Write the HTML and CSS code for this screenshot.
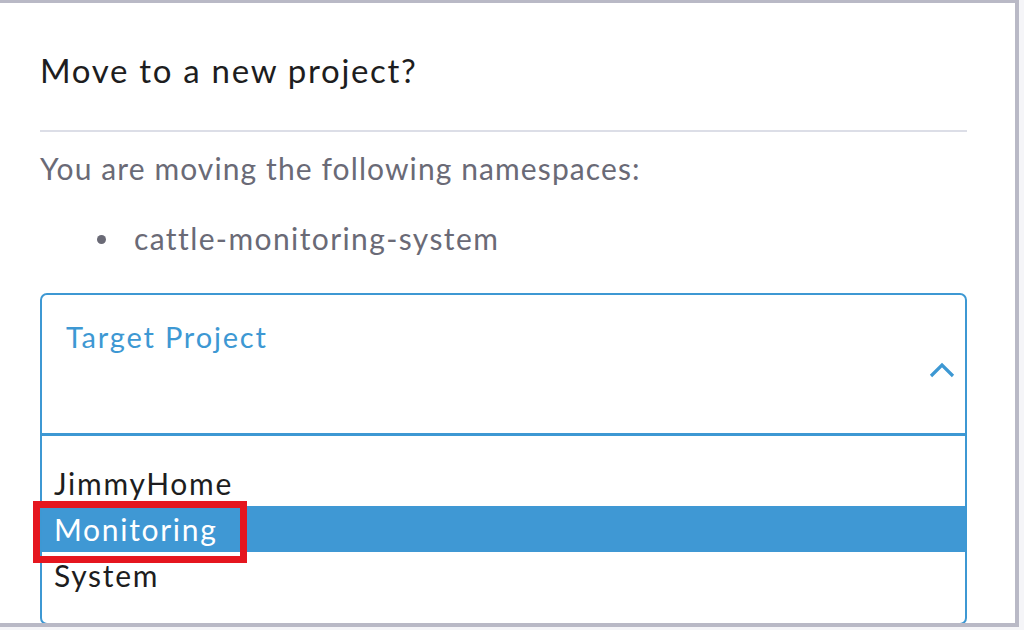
FILE: index.html
```html
<!DOCTYPE html>
<html lang="en">
<head>
<meta charset="utf-8">
<title>Move to a new project?</title>
<link rel="stylesheet" href="styles.css">
</head>
<body>
<div class="modal">
  <h2 class="title">Move to a new project?</h2>
  <hr class="divider">
  <p class="intro">You are moving the following namespaces:</p>
  <ul class="ns-list">
    <li>cattle-monitoring-system</li>
  </ul>
  <div class="select">
    <div class="select-head">
      <span class="select-label">Target Project</span>
      <svg class="chevron" width="26" height="16" viewBox="0 0 26 16" aria-hidden="true">
        <polyline points="2,14 13,3 24,14" fill="none" stroke="#3d98d3" stroke-width="3.2"/>
      </svg>
    </div>
    <ul class="options">
      <li class="option">JimmyHome</li>
      <li class="option selected">Monitoring<span class="annot"></span></li>
      <li class="option">System</li>
    </ul>
  </div>
</div>
</body>
</html>
```
FILE: styles.css
```css
html, body {
  margin: 0;
  padding: 0;
}
body {
  background: #f5f5f8;
  font-family: Lato, "Noto Sans", sans-serif;
  width: 1024px;
  height: 630px;
  overflow: hidden;
}
.modal {
  box-sizing: border-box;
  width: 1019px;
  height: 627px;
  background: #ffffff;
  border-top: 3px solid #b9b9c6;
  border-right: 4px solid #b9b9c6;
  border-bottom: 4px solid #b9b9c6;
  padding: 47px 48px 0 40px;
  overflow: hidden;
}
.title {
  margin: 0;
  font-size: 33px;
  line-height: 40px;
  font-weight: 400;
  letter-spacing: 1.7px;
  color: #1d1d20;
}
.divider {
  margin: 40px 0 0 0;
  border: 0;
  height: 2px;
  background: #dcdee7;
}
.intro {
  margin: 18px 0 0 0;
  font-size: 30px;
  line-height: 36px;
  letter-spacing: 1.1px;
  color: #6a6a76;
}
.ns-list {
  margin: 34px 0 0 0;
  padding: 0 0 0 57px;
  list-style: none;
  font-size: 30px;
  line-height: 36px;
  letter-spacing: 1.4px;
  color: #6a6a76;
}
.ns-list li {
  display: flex;
  align-items: center;
  gap: 28px;
}
.ns-list li::before {
  content: "";
  width: 9px;
  height: 9px;
  border-radius: 50%;
  background: #6a6a76;
  margin-top: 2px;
}
.select {
  margin-top: 37px;
  border: 2px solid #3d98d3;
  border-radius: 7px;
  position: relative;
}
.select-head {
  display: flex;
  align-items: flex-start;
  height: 138px;
  padding: 0 10px 0 24px;
  border-bottom: 3px solid #3d98d3;
}
.select-label {
  flex: 1;
  padding-top: 24px;
  font-size: 29px;
  line-height: 36px;
  letter-spacing: 1.8px;
  color: #3d98d3;
}
.chevron {
  margin-top: 67px;
}
.options {
  list-style: none;
  margin: 0;
  padding: 24px 0 25px 0;
}
.option {
  position: relative;
  height: 46px;
  padding-left: 12px;
  font-size: 30px;
  line-height: 46px;
  letter-spacing: 1.7px;
  color: #1d1d20;
}
.option.selected {
  background: #3f98d4;
  color: #ffffff;
}
.annot {
  position: absolute;
  left: -9px;
  top: -5px;
  width: 214px;
  height: 62px;
  box-sizing: border-box;
  border: 7px solid #e5161f;
}
```
